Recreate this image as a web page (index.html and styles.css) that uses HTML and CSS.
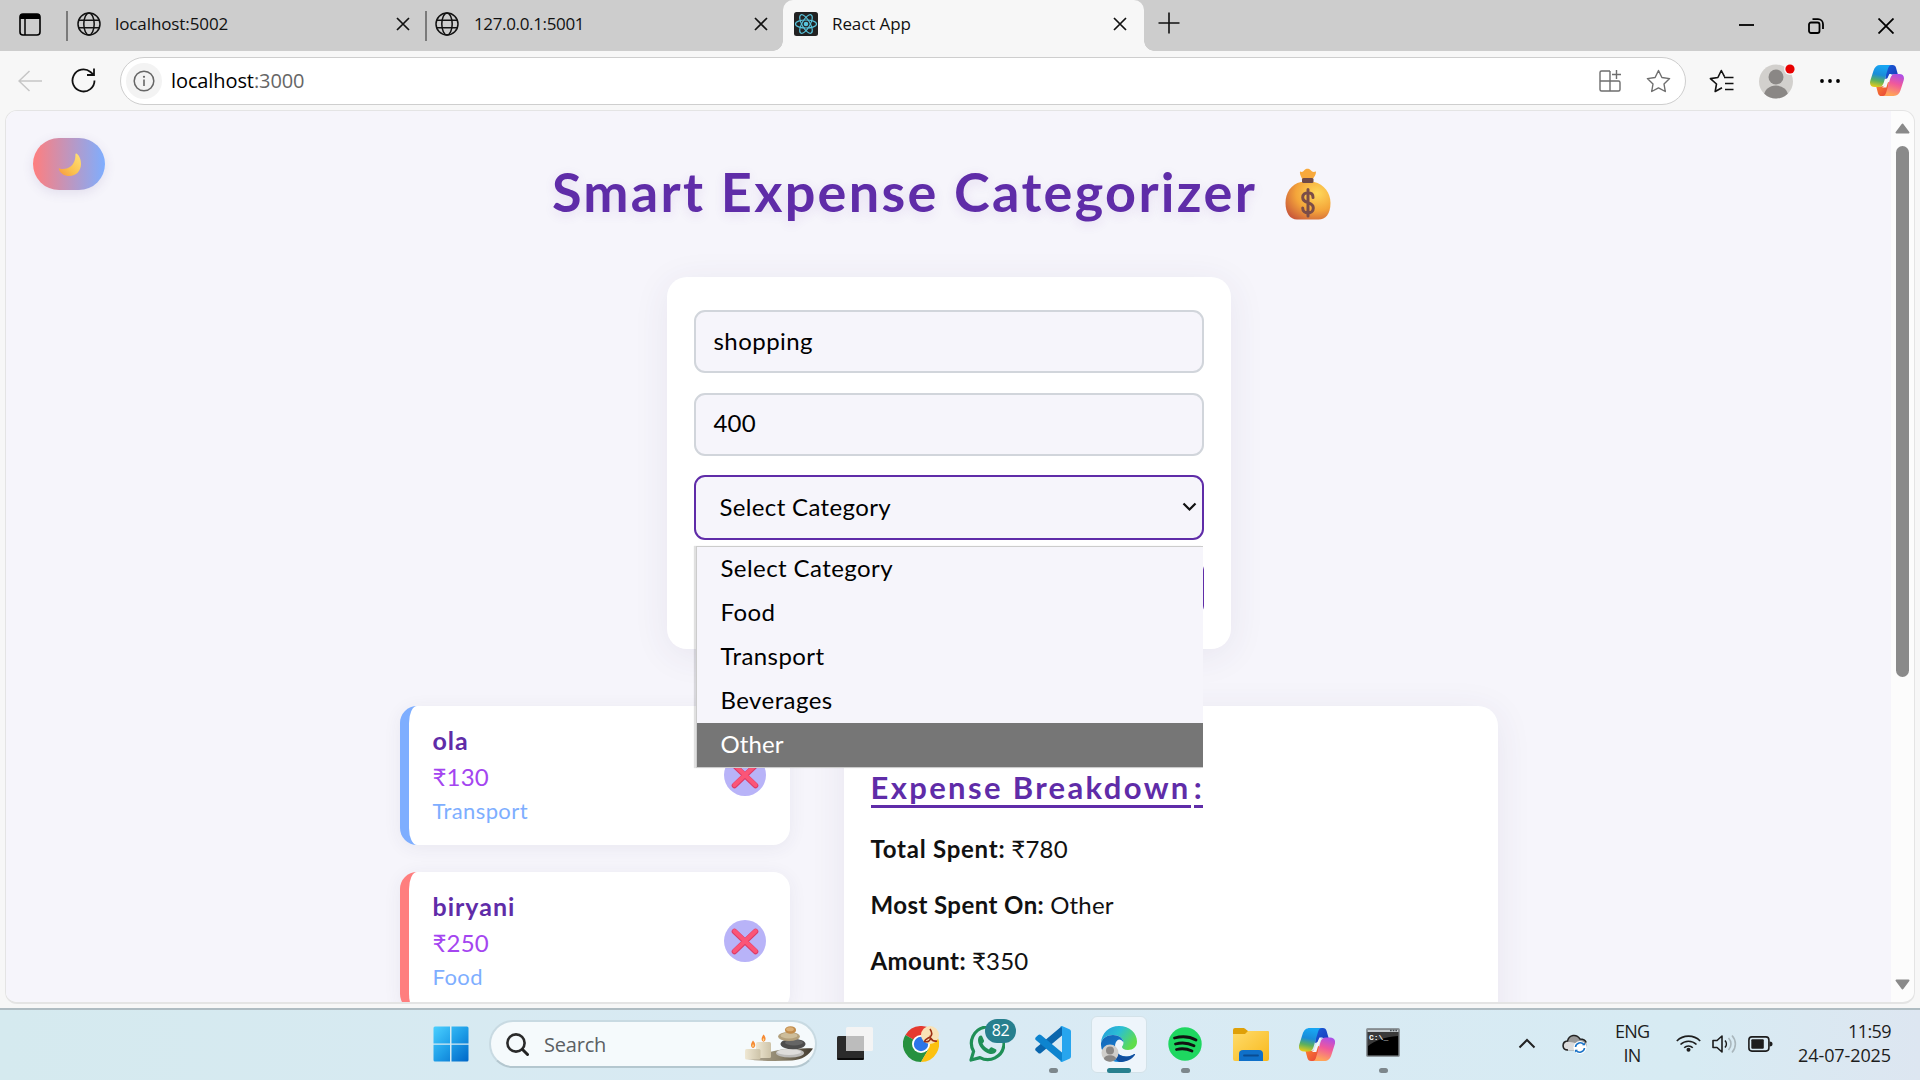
FILE: index.html
```html
<!DOCTYPE html>
<html lang="en">
<head>
<meta charset="utf-8">
<title>React App</title>
<link rel="stylesheet" href="styles.css">
</head>
<body>
<svg class="defs" width="0" height="0" aria-hidden="true">
  <defs>
    <linearGradient id="cpBlue" x1="0.3" y1="0" x2="0.1" y2="1"><stop offset="0" stop-color="#18a5f2"/><stop offset=".4" stop-color="#1a8cd8"/><stop offset=".68" stop-color="#5cb05e"/><stop offset="1" stop-color="#f8cf10"/></linearGradient>
    <linearGradient id="cpDark" x1="0" y1="0" x2="1" y2="1"><stop offset="0" stop-color="#1b5fd9"/><stop offset="1" stop-color="#1636b8"/></linearGradient>
    <linearGradient id="cpPink" x1="0.9" y1="0" x2="0.6" y2="1"><stop offset="0" stop-color="#a54df0"/><stop offset=".5" stop-color="#f0589c"/><stop offset="1" stop-color="#ffa35a"/></linearGradient>
    <linearGradient id="cpRed" x1="0" y1="0" x2="1" y2="1"><stop offset="0" stop-color="#fb8a2c"/><stop offset="1" stop-color="#e8403c"/></linearGradient>
    <linearGradient id="winTop" x1="0" y1="0" x2="1" y2="1"><stop offset="0" stop-color="#4bd0ff"/><stop offset=".5" stop-color="#1f9fe8"/><stop offset="1" stop-color="#0067c8"/></linearGradient>
    <radialGradient id="bag" cx=".7" cy=".3" r=".85"><stop offset="0" stop-color="#ffd95a"/><stop offset=".55" stop-color="#f4a53a"/><stop offset="1" stop-color="#c9583a"/></radialGradient>
    <linearGradient id="moon" x1="1" y1="0" x2="0" y2="1"><stop offset="0" stop-color="#ffe27a"/><stop offset=".6" stop-color="#fbc04e"/><stop offset="1" stop-color="#f79540"/></linearGradient>
    <linearGradient id="edgeA" x1="0" y1="0" x2="1" y2=".5"><stop offset="0" stop-color="#2498dc"/><stop offset=".5" stop-color="#2bbfd4"/><stop offset="1" stop-color="#5fdd4c"/></linearGradient>
    <linearGradient id="edgeB" x1="0" y1="0" x2=".6" y2="1"><stop offset="0" stop-color="#1565b5"/><stop offset="1" stop-color="#1487dc"/></linearGradient>
    <linearGradient id="folder" x1="0" y1="0" x2="1" y2="1"><stop offset="0" stop-color="#ffdc6b"/><stop offset="1" stop-color="#f8b81c"/></linearGradient>
    <linearGradient id="candle" x1="0" y1="0" x2="1" y2="0"><stop offset="0" stop-color="#efe8d4"/><stop offset="1" stop-color="#cdc3a8"/></linearGradient>
    <linearGradient id="tray" x1="0" y1="0" x2="1" y2="0"><stop offset="0" stop-color="#b5ac98"/><stop offset=".5" stop-color="#8f866f"/><stop offset="1" stop-color="#3f382d"/></linearGradient>
    <symbol id="globe" viewBox="0 0 24 24"><g fill="none" stroke="#111" stroke-width="1.5"><circle cx="12" cy="12" r="11"/><ellipse cx="12" cy="12" rx="5.2" ry="11"/><path d="M2 8.2h20M2 15.8h20"/></g></symbol>
    <symbol id="cross" viewBox="0 0 14 14"><path d="M1 1l12 12M13 1L1 13" fill="none" stroke="#111" stroke-width="1.7"/></symbol>
    <symbol id="copilot" viewBox="0 0 36 33">
      <path d="M17 0h7c2 0 3 1 3.600 3l2 7h-5c-3 0-4.500 1-5.500 4l-3 1z" fill="url(#cpDark)"/>
      <path d="M19 33h-7c-2 0-3-1-3.600-3l-1.900-7h5c3 0 4.500-1 5.500-4l3-1z" fill="url(#cpRed)"/>
      <path d="M11 0h12c-2 0-3.200 1.500-4 4l-4.500 15c-1 3-2.500 4.500-5.500 4.500H5c-4 0-6-2.500-4.700-7L3.600 6C5 2 7 0 11 0z" fill="url(#cpBlue)"/>
      <path d="M25 33H13.500c2 0 3-1.500 3.700-4L21.500 14c1-3 2.500-4.500 5.500-4.500h4c4 0 6 2.500 4.700 7L32.400 27C31 31 29 33 25 33z" fill="url(#cpPink)"/>
      <path d="M20.500 9.500h3.500c-2 .7-3 2-3.700 4.500l-3 10h-4.500c1.500-.8 2.400-2 3-4z" fill="#f4f6fa"/>
    </symbol>
    <symbol id="redx" viewBox="0 0 28 27"><path d="M3.500 3.500l21 20M24.500 3.500l-21 20" fill="none" stroke="#dd3c68" stroke-width="5.600" stroke-linecap="round"/><path d="M3.500 3l21 20M24.500 3l-21 20" fill="none" stroke="#fb5577" stroke-width="4" stroke-linecap="round"/></symbol>
  </defs>
</svg>

<div class="desktop">
  <header class="tabstrip">
    <svg class="tab-actions" width="22" height="23" viewBox="0 0 22 23"><rect x="1" y="1" width="20" height="21" rx="3" fill="none" stroke="#000" stroke-width="1.600"/><path d="M1 6V4a3 3 0 0 1 3-3h14a3 3 0 0 1 3 3v2z" fill="#000"/><path d="M6 6v16" stroke="#000" stroke-width="1.500"/></svg>
    <div class="tab tab-first"><svg width="24" height="24"><use href="#globe"/></svg><span class="tab-title">localhost:5002</span><svg width="14" height="14"><use href="#cross"/></svg></div>
    <div class="tab tab-second"><svg width="24" height="24"><use href="#globe"/></svg><span class="tab-title">127.0.0.1:5001</span><svg width="14" height="14"><use href="#cross"/></svg></div>
    <div class="tab tab-active">
      <svg width="24" height="24" viewBox="0 0 24 24"><rect width="24" height="24" rx="2.500" fill="#222"/><g fill="none" stroke="#58c4dc" stroke-width="1.200"><ellipse cx="12" cy="12" rx="10.500" ry="4"/><ellipse cx="12" cy="12" rx="10.500" ry="4" transform="rotate(60 12 12)"/><ellipse cx="12" cy="12" rx="10.500" ry="4" transform="rotate(120 12 12)"/></g><circle cx="12" cy="12" r="2.300" fill="#58c4dc"/></svg>
      <span class="tab-title">React App</span><svg width="14" height="14"><use href="#cross"/></svg>
    </div>
    <svg class="new-tab" width="22" height="22" viewBox="0 0 22 22"><path d="M11 0.500v21M0.500 11h21" stroke="#111" stroke-width="1.600"/></svg>
    <div class="window-controls">
      <svg width="15" height="15" viewBox="0 0 15 15"><path d="M0 7h15" stroke="#000" stroke-width="1.800"/></svg>
      <svg width="16" height="16" viewBox="0 0 16 16"><g fill="none" stroke="#000" stroke-width="1.800"><rect x="1" y="4.500" width="10.500" height="10.500" rx="2"/><path d="M4.500 1.200H10a5 5 0 0 1 5 5V11"/></g></svg>
      <svg width="16" height="16" viewBox="0 0 16 16"><path d="M.5.5l15 15M15.500.5l-15 15" stroke="#000" stroke-width="1.800"/></svg>
    </div>
  </header>

  <div class="toolbar">
    <svg class="back" width="24" height="22" viewBox="0 0 24 22"><path d="M24 11H1M11.500 1L1 11l10.500 10" fill="none" stroke="#c6c6c6" stroke-width="1.500"/></svg>
    <svg class="reload" width="25" height="25" viewBox="0 0 25 25"><path d="M23.500 12.500A11 11 0 1 1 19.500 4l3 2.600M23 .5v6.500h-7" fill="none" stroke="#111" stroke-width="1.800"/></svg>
    <div class="address">
      <span class="site-info"><svg width="22" height="22" viewBox="0 0 22 22"><circle cx="11" cy="11" r="9.800" fill="none" stroke="#666" stroke-width="1.500"/><path d="M11 9.500V16" stroke="#666" stroke-width="1.600"/><circle cx="11" cy="6.800" r="1.100" fill="#666"/></svg></span>
      <span class="url">localhost<i>:3000</i></span>
      <svg class="apps" width="22" height="22" viewBox="0 0 22 22"><g fill="none" stroke="#6e6e6e" stroke-width="1.400"><path d="M11 1H2.500A1.500 1.500 0 0 0 1 2.500v17A1.500 1.500 0 0 0 2.500 21h17a1.500 1.500 0 0 0 1.500-1.500V12.500A1.500 1.500 0 0 0 19.500 11H1M11 1v20"/><path d="M17.500 0v9M13 4.500h9"/></g></svg>
      <svg width="25" height="24" viewBox="0 0 25 24"><path d="M12.500 1.500l3.400 7 7.700 1.100-5.600 5.400 1.300 7.500-6.800-3.600-6.800 3.600L7 15 1.400 9.600l7.700-1.100z" fill="none" stroke="#6e6e6e" stroke-width="1.400" stroke-linejoin="round"/></svg>
    </div>
    <svg class="favs" width="25" height="24" viewBox="0 0 25 24"><path d="M13 18.800l-6.800 3.700L7.500 15 1.400 9.600l7.500-1.100 3.400-7 3.200 6.200M15 8.500h9.500M16 14.500h8.500M16 20.500h8.500" fill="none" stroke="#111" stroke-width="1.600" stroke-linejoin="round"/></svg>
    <svg class="avatar" width="37" height="36" viewBox="0 0 37 36"><clipPath id="avc"><circle cx="17" cy="18.500" r="17"/></clipPath><g clip-path="url(#avc)"><rect width="36" height="36" fill="#d2d0cd"/><circle cx="17" cy="14" r="7.500" fill="#8a8785"/><ellipse cx="17" cy="33" rx="12" ry="10.500" fill="#8a8785"/></g><circle cx="31" cy="6" r="6" fill="#f7f7f7"/><circle cx="31" cy="6" r="4.600" fill="#e80000"/></svg>
    <svg class="dots" width="22" height="6" viewBox="0 0 22 6"><circle cx="3" cy="3" r="1.900"/><circle cx="11" cy="3" r="1.900"/><circle cx="19" cy="3" r="1.900"/></svg>
    <svg class="copilot" width="34" height="31"><use href="#copilot"/></svg>
  </div>

  <div class="viewport">
    <main class="page">
      <div class="page-head">
        <button class="theme"><svg width="24" height="24" viewBox="0 0 24 24"><path d="M18.500 0.500C21 2 23 6 23 11c0 7-5 12-11.500 12C6 23 2 20 .800 16.200c-.3-.9.2-1.100.9-.8 3 1 7 .8 10.500-1.600C16 11 17.500 6.500 17.400 1.400c0-.9.500-1.200 1.100-.9z" fill="url(#moon)"/></svg></button>
        <h1>Smart Expense Categorizer
          <svg width="46" height="52" viewBox="0 0 46 52"><path d="M15 3.500c2 1 3 .5 4.500-1.500C21 .2 24 .2 25.500 2c1.500 2 3 2.500 5.500 1.500 0 4-2 5-3.500 8.500h-10C16.500 8.500 14.500 7 15 3.500z" fill="#f8a93c"/><path d="M16 14h13c10 2 16.500 11 16.500 21 0 11-5 16.500-12 16.500H12C5 51.500.5 45 .5 35 .5 25 6 16 16 14z" fill="url(#bag)"/><rect x="17" y="10" width="11.500" height="5" rx="1.500" fill="#704a48"/><path d="M28 29.500c0-3-2-4.800-5-4.800s-5.300 1.800-5.300 4.800c0 3.300 2.300 4.200 5.300 5.200s5.300 2 5.300 5.200-2.300 5-5.300 5-5.300-1.900-5.300-5M23 21.500v26.500" fill="none" stroke="#7b4d48" stroke-width="3" stroke-linecap="round"/></svg>
        </h1>
      </div>

      <form class="expense-form">
        <div class="field">shopping</div>
        <div class="field field-amount">400</div>
        <div class="select">
          <span>Select Category</span>
          <svg width="15" height="10" viewBox="0 0 15 10"><path d="M1.500 1.500l6 6 6-6" fill="none" stroke="#111" stroke-width="2.200"/></svg>
          <ul class="options">
            <li>Select Category</li><li>Food</li><li>Transport</li><li>Beverages</li><li class="hover">Other</li>
          </ul>
        </div>
        <div class="submit"></div>
      </form>

      <div class="columns">
        <div class="list">
          <article class="expense expense-blue"><div><h3>ola</h3><p class="amount">₹130</p><p class="category">Transport</p></div><span class="delete"><svg width="28" height="27"><use href="#redx"/></svg></span></article>
          <article class="expense expense-red"><div><h3>biryani</h3><p class="amount">₹250</p><p class="category">Food</p></div><span class="delete"><svg width="28" height="27"><use href="#redx"/></svg></span></article>
        </div>
        <section class="breakdown">
          <h2><span>Expense Breakdown</span><span>:</span></h2>
          <p><b class="total">Total Spent:</b><span>₹780</span></p>
          <p><b>Most Spent On:</b><span>Other</span></p>
          <p><b>Amount:</b><span>₹350</span></p>
        </section>
      </div>
    </main>
    <div class="scrollbar">
      <svg width="15" height="11" viewBox="0 0 15 11"><path d="M7.500 1.500L13.500 9.500H1.500z" fill="#8a8a8a" stroke="#8a8a8a" stroke-width="2" stroke-linejoin="round"/></svg>
      <div class="thumb"></div>
      <svg class="down" width="15" height="11" viewBox="0 0 15 11"><path d="M7.500 9.500L1.500 1.500h12z" fill="#8a8a8a" stroke="#8a8a8a" stroke-width="2" stroke-linejoin="round"/></svg>
    </div>
  </div>

  <footer class="taskbar">
    <div class="cell start"><svg width="36" height="36" viewBox="0 0 36 36"><path d="M2 .5h15v17H.5V2A1.500 1.500 0 0 1 2 .5zM18.500.5H34A1.500 1.500 0 0 1 35.500 2v15.500h-17zM.5 18.800H17v16.700H2A1.500 1.500 0 0 1 .5 34zM18.500 18.800h17V34a1.500 1.500 0 0 1-1.500 1.500H18.500z" fill="url(#winTop)"/></svg></div>
    <div class="search">
      <svg width="23" height="23" viewBox="0 0 23 23"><circle cx="10" cy="10" r="8.600" fill="none" stroke="#2a2a2a" stroke-width="2.600"/><path d="M16.500 16.500l5 5" stroke="#222" stroke-width="3" stroke-linecap="round"/></svg>
      <span>Search</span>
      <svg width="70" height="37" viewBox="0 0 70 37"><path d="M1 31c10-1 18-4 34-7 12-1 24-2 34-1.500C65 29 58 34 48 34.500 30 35.500 12 35 3 33z" fill="url(#tray)"/><rect x="12" y="16" width="15" height="16" rx="1.500" fill="url(#candle)"/><rect x="1" y="23" width="15.500" height="10.500" rx="1.500" fill="url(#candle)"/><path d="M19.500 8.500c3 3 2.500 6.500 0 7.300-2.500-.8-2.500-4 0-7.300zM9 14.500c3 3 2.800 6.500.3 7.500-3-.8-3-4-.3-7.500z" fill="#f58a35"/><path d="M19.500 12c1.200 1.500 1 2.500 0 3-1-.5-1-1.500 0-3zM9 18c1.200 1.500 1 2.500 0 3-1-.5-1-1.500 0-3z" fill="#ffd98a"/><ellipse cx="46" cy="27" rx="14" ry="4.500" fill="#bdbcba"/><ellipse cx="45" cy="26" rx="12" ry="3" fill="#dedddb"/><ellipse cx="49" cy="18" rx="12.500" ry="5.300" fill="#4c4c4c"/><ellipse cx="50" cy="16.500" rx="9" ry="3" fill="#656565"/><ellipse cx="45" cy="10.500" rx="11" ry="4.500" fill="#b3a07c"/><ellipse cx="45" cy="9.500" rx="8.500" ry="3" fill="#cdbd9a"/><ellipse cx="46.500" cy="4" rx="5.600" ry="3.800" fill="#c18c4c"/><ellipse cx="46" cy="3.200" rx="3.800" ry="2" fill="#dcb076"/></svg>
    </div>
    <div class="cell"><svg width="36" height="36" viewBox="0 0 36 36"><rect x="0" y="10" width="27" height="24" rx="1.500" fill="#2b2b2b"/><path d="M.5 33h26" stroke="#000" stroke-width="1.500"/><rect x="9" y="1" width="27" height="24" rx="1.500" fill="#f4f4f4"/><path d="M9 10h18v15H9z" fill="#bcbcbc"/></svg></div>
    <div class="cell"><svg width="36" height="36" viewBox="0 0 36 36"><path d="M18 18L2.400 9A18 18 0 0 1 33.600 9z" fill="#e53a30"/><path d="M18 18L2.400 9A18 18 0 0 0 18 36l8-13.500z" fill="#26913f"/><path d="M18 18l15.600-9A18 18 0 0 1 18 36l7-12z" fill="#fcc111"/><path d="M18 9.800h15.600L30 18z" fill="#fcc111"/><circle cx="18" cy="18" r="9" fill="#fff"/><circle cx="18" cy="18" r="7.200" fill="#2c75e8"/><circle cx="27" cy="9" r="9" fill="#f9e2b6"/><path d="M27 3c2 3 2.500 6 0 8-2.500 1.500-5 2-5.500 4.500 3 .8 6-.5 6-3.500 1.500 2.500 4 3.500 6.500 3" fill="none" stroke="#9c2f14" stroke-width="1.600"/></svg></div>
    <div class="cell"><svg width="36" height="36" viewBox="0 0 36 36"><path d="M2 34l2.600-8.600A16.300 16.300 0 1 1 11 31.600z" fill="none" stroke="#1f8f56" stroke-width="3.200" stroke-linejoin="round"/><path d="M9.500 11.500c1-2.200 3-2.800 4-.5l1.500 3.500c.3 1-.5 2-1.500 3 1.500 3 3.500 4.500 6.500 6 1-1.500 2-2.500 3.200-2l3.500 1.700c1.500.8.500 3-1.200 4-7 4-19-8-16-15.700z" fill="#1f8f56"/></svg><span class="badge">82</span></div>
    <div class="cell"><svg width="36" height="36" viewBox="0 0 36 36"><path d="M27 0v9.500L6 27c-.8.700-2 .7-2.700 0L.8 24.700c-.8-.8-.8-2 0-2.800z" fill="#0a66ad"/><path d="M27 36v-9.500L6 9c-.8-.7-2-.7-2.700 0L.8 11.300c-.8.800-.8 2 0 2.800z" fill="#0d84cf"/><path d="M27 0l7.500 3.300c1 .5 1.500 1.300 1.500 2.400v24.600c0 1.100-.5 1.900-1.500 2.400L27 36c-1 0-1.500-.3-2-1 1 .5 2 0 2-1.500V2.500C27 1 26 .5 25 1c.5-.7 1-1 2-1z" fill="#27a5ee"/></svg><span class="dot"></span></div>
    <div class="cell"><div class="tile"><svg width="36" height="36" viewBox="0 0 36 36"><path d="M0 17C.5 7 8 0 18 0c11 0 18 7.500 18 15.500 0 5.500-4 8.500-9 8.500-4 0-6-1.500-6-3 0-1 1.500-1.500 1.500-4.500 0-4.500-5-7.500-10.500-7.500C6 9 1.500 12 0 17z" fill="url(#edgeA)"/><path d="M0 17c1.500-5 6-8 12-8 5.500 0 10.500 3 10.500 7.500-1-2-3-3-4.500-3-3 1-4 4-4 7 0 6 5 10 11 10 3 0 5-.5 7.500-2-3 5-8.500 7.500-14 7.500C7 36-.5 27 0 17z" fill="url(#edgeB)"/><path d="M14 20c0 7 6 11 12 10.500 3-.2 5-1 7-2.400.800-.5 1.300.1.900.9C31 33.500 25 36 18.500 36 13 34 11 25 14 20z" fill="#104f9e"/><circle cx="9" cy="27" r="8.500" fill="#d0cecb"/><circle cx="9" cy="24.500" r="4" fill="#8a8785"/><path d="M3 33c0-5 12-5 12 0-3 3.500-9 3.500-12 0z" fill="#8a8785"/></svg></div><span class="dot dot-active"></span></div>
    <div class="cell"><svg width="34" height="34" viewBox="0 0 34 34"><circle cx="17" cy="17" r="16.700" fill="#1ed760"/><path d="M6.500 11c7.500-2 15.500-1.300 21.500 2M7.500 17c6.500-1.800 13-1 18.500 1.800M8.500 22.500c5.500-1.400 10.500-.8 15.500 1.500" fill="none" stroke="#111" stroke-width="2.800" stroke-linecap="round"/></svg><span class="dot"></span></div>
    <div class="cell"><svg width="36" height="33" viewBox="0 0 36 33"><path d="M0 2a2 2 0 0 1 2-2h8c1.500 0 2 .5 3 1.500L15 3h19a2 2 0 0 1 2 2v5H0z" fill="#dfa008"/><path d="M0 6h12l3-3h19.500A1.500 1.500 0 0 1 36 4.500V31a2 2 0 0 1-2 2H2a2 2 0 0 1-2-2z" fill="url(#folder)"/><path d="M6 33v-7a4 4 0 0 1 4-4h16a4 4 0 0 1 4 4v7z" fill="#0f70c9"/><path d="M11 27.500h14" stroke="#0a4c92" stroke-width="1.800" stroke-linecap="round"/></svg></div>
    <div class="cell"><svg width="36" height="33"><use href="#copilot"/></svg></div>
    <div class="cell"><svg class="cmd" width="34" height="29" viewBox="0 0 34 29"><rect x=".8" y=".8" width="32.400" height="27.400" rx="1" fill="#000" stroke="#8f979c" stroke-width="1.600"/><path d="M1.500 1.500h31V4h-31z" fill="#c3cace"/><path d="M24 2.500h7" stroke="#4b5258" stroke-width="1.400" stroke-dasharray="1.700 1"/><path d="M2 4h30v4C18 9 8 13 2 18z" fill="#3a3a3a"/><text x="3" y="11.500" class="prompt">C:\_</text></svg><span class="dot"></span></div>
    <div class="tray">
      <svg width="18" height="11" viewBox="0 0 18 11"><path d="M1.500 9.500L9 2l7.500 7.500" fill="none" stroke="#222" stroke-width="2"/></svg>
      <svg class="cloud" width="26" height="21" viewBox="0 0 26 21"><path d="M6 17.500c-7 0-7-9-.5-9.500C7 2 14.500 0 18 6c4 0 6.500 2.500 6.500 6s-2.500 5.500-5.500 5.500z" fill="#999"/><path d="M6 17c-5 0-5.500-6-1.500-8 4 0 9 .500 14 3v5z" fill="#dcdcdc"/><path d="M6 17c-6.500 0-6.500-8.500-.5-9C7 1.500 14.500.500 18 6c3 0 5.500 1.500 6.200 3.500" fill="none" stroke="#222" stroke-width="1.500"/><circle cx="18" cy="14.500" r="6.500" fill="#fff"/><path d="M13.500 14a4.700 4.700 0 0 1 8.500-2.200M22.500 15a4.700 4.700 0 0 1-8.500 2.200" fill="none" stroke="#1a73c7" stroke-width="1.600"/><path d="M20.200 12.200h2.800V9.400zM15.800 16.800H13v2.800z" fill="#1a73c7"/></svg>
      <div class="lang"><span>ENG</span><span>IN</span></div>
      <svg class="wifi" width="25" height="18" viewBox="0 0 25 18"><g fill="none" stroke="#1d1d1d" stroke-width="1.600"><path d="M.8 7a16.500 16.500 0 0 1 23.400 0M4.500 10.500a11.300 11.300 0 0 1 16 0M8.200 13.800a6 6 0 0 1 8.600 0"/></g><circle cx="12.500" cy="15.800" r="2" fill="#1d1d1d"/></svg>
      <svg class="volume" width="25" height="20" viewBox="0 0 25 20"><g fill="none" stroke="#1d1d1d" stroke-width="1.600"><path d="M1 6.500h4L10 2v16l-5-4.500H1z" stroke-linejoin="round"/><path d="M13 6.500c1.800 2 1.800 5 0 7"/><path d="M16.500 4c3.300 3.500 3.300 8.500 0 12M20 1.500c4.500 5 4.500 12 0 17" stroke="#a9b6bc"/></g></svg>
      <svg class="battery" width="25" height="16" viewBox="0 0 25 16"><rect x=".9" y=".9" width="20" height="14.200" rx="3" fill="none" stroke="#1d1d1d" stroke-width="1.600"/><rect x="3.300" y="3.300" width="12.500" height="9.400" rx="1" fill="#1d1d1d"/><path d="M21.500 5.500c2.500 0 3 1 3 2.500s-.5 2.500-3 2.500z" fill="#1d1d1d"/></svg>
      <div class="clock"><span class="time">11:59</span><span>24-07-2025</span></div>
    </div>
  </footer>
</div>
</body>
</html>
```
FILE: styles.css
```css
* { box-sizing: border-box; }
html, body { margin: 0; height: 100%; overflow: hidden; }
body { font-family: "Open Sans", "Noto Sans", sans-serif; color: #111; background: #f7f7f7; }
h1, h2, h3, p, ul { margin: 0; padding: 0; }
svg { display: block; flex: none; }
.defs { position: absolute; }
.desktop { width: 1920px; height: 1080px; display: flex; flex-direction: column; overflow: hidden; }

/* Tab strip */
.tabstrip { height: 51px; flex: none; background: #cdcdcd; display: flex; padding-left: 19px; }
.tab-actions { margin-top: 13px; margin-right: 25px; }
.tab { display: flex; align-items: center; height: 51px; padding-bottom: 3px; font-size: 17px; }
.tab-title { flex: 1; padding-bottom: 2px; letter-spacing: -0.1px; white-space: nowrap; }
.tab-first { width: 359px; padding-left: 11px; padding-right: 15px; gap: 14px; background: linear-gradient(#7a7a7a, #7a7a7a) 0 11px / 2px 30px no-repeat; }
.tab-second { width: 358px; padding-left: 10px; padding-right: 15px; gap: 15px; background: linear-gradient(#7a7a7a, #7a7a7a) 0 11px / 2px 30px no-repeat; }
.tab-second .tab-title { letter-spacing: -0.35px; }
.tab-active { position: relative; width: 361px; padding: 0 17px 3px 11px; gap: 14px; border-radius: 10px 10px 0 0; background: #f7f7f7; }
.tab-active::before, .tab-active::after { content: ""; position: absolute; bottom: 0; width: 10px; height: 10px; }
.tab-active::before { left: -10px; background: radial-gradient(circle at 0 0, transparent 9.5px, #f7f7f7 10px); }
.tab-active::after { right: -10px; background: radial-gradient(circle at 100% 0, transparent 9.5px, #f7f7f7 10px); }
.new-tab { margin: 12px 0 0 14px; }
.window-controls { margin-left: auto; display: flex; align-items: center; gap: 54px; padding-right: 26px; }

/* Toolbar */
.toolbar { height: 59px; flex: none; display: flex; align-items: center; padding-left: 18px; background: #f7f7f7; }
.reload { margin: 0 24px 0 29px; }
.address { width: 1566px; height: 48px; border: 1.5px solid #cecece; border-radius: 24px; background: #fff; display: flex; align-items: center; padding: 0 14px 0 5px; }
.site-info { width: 36px; height: 36px; border-radius: 50%; background: #f3f3f3; display: grid; place-items: center; }
.url { flex: 1; margin-left: 9px; font-size: 20px; letter-spacing: -0.1px; color: #000; }
.url i { font-style: normal; color: #666; }
.apps { margin-right: 25px; }
.favs { margin-left: 23px; }
.avatar { margin-left: 25px; margin-right: 23px; }
.copilot { margin-left: 29px; }

/* Browser viewport */
.viewport { flex: none; height: 894px; margin: 0 5px 0 5px; border: 1px solid #e4e4e4; border-bottom-width: 2px; border-radius: 12px; display: flex; overflow: hidden; background: #fcfcfc; }
.scrollbar { width: 23px; display: flex; flex-direction: column; align-items: center; padding: 12px 0; margin-left: auto; }
.thumb { width: 13px; height: 531px; margin-top: 12px; border-radius: 7px; background: #8a8a8a; }
.down { margin-top: auto; }

/* Expense page */
.page { width: 1885px; padding-top: 1px; background: #f6f5fb; font-family: "Lato", "Open Sans", sans-serif; }
.page-head { display: grid; grid-template-columns: 1fr auto 1fr; align-items: start; padding-right: 14px; }
.theme { width: 72px; height: 52px; margin: 26px 0 0 27px; padding: 1px 0 0 2px; border: 0; border-radius: 26px; background: linear-gradient(90deg, #ff7e7e, #7eaeff); box-shadow: 0 3px 12px rgba(80, 60, 130, .12); display: grid; place-items: center; }
h1 { display: flex; align-items: center; gap: 28px; height: 64px; margin-top: 48px; font-size: 54px; line-height: 64px; font-weight: 700; letter-spacing: 2.3px; color: #5f2ca8; text-shadow: 0 3px 12px rgba(95, 44, 168, .12); white-space: nowrap; }
h1 svg { position: relative; top: 2px; }
.expense-form { width: 564px; height: 372px; margin: 53px auto 0; padding: 33px 27px; display: flex; flex-direction: column; gap: 19.5px; border-radius: 20px; background: #fff; box-shadow: 0 6px 36px rgba(60, 50, 100, .08); }
.field, .select { height: 63px; flex: none; border: 2px solid #d1d5db; border-radius: 11px; background: #f6f5fb; padding: 0 18px 2px; display: flex; align-items: center; font-size: 24px; letter-spacing: .45px; color: #000; }
.field-amount { padding-bottom: 3px; letter-spacing: .2px; }
.select { position: relative; height: 65px; border-color: #5f2ca8; padding: 0 5px 3px 24px; justify-content: space-between; letter-spacing: .35px; }
.select svg { position: relative; top: 1px; }
.submit { height: 56px; flex: none; margin-left: 2px; border-radius: 11px; background: #5f2ca8; }
.options { position: absolute; z-index: 2; top: 69px; left: 0; width: 507px; list-style: none; background: #f6f5fb; border: solid #ccc; border-width: 1px 0 1px 1px; box-shadow: -2px 0 1px rgba(0, 0, 0, .12); }
.options li { height: 44px; line-height: 42px; padding-left: 24px; letter-spacing: .42px; }
.options .hover { background: #767676; color: #fff; letter-spacing: .1px; }
.columns { display: flex; gap: 54px; width: 1098px; margin: 57px auto 0; }
.list { width: 390px; display: flex; flex-direction: column; gap: 27px; }
.expense { height: 139px; border-left: 9px solid; border-radius: 17px; background: #fff; padding: 16px 24px 0; display: flex; justify-content: space-between; box-shadow: 0 3px 18px rgba(60, 50, 100, .07); }
.expense-blue { border-left-color: #7eaeff; }
.expense-red { border-left-color: #ff7e7e; }
h3 { font-size: 25px; line-height: 37px; font-weight: 700; letter-spacing: 1px; color: #5f2ca8; }
.amount { font-size: 24px; line-height: 36px; letter-spacing: .2px; color: #a445f0; }
.category { font-size: 22px; line-height: 31px; letter-spacing: .4px; color: #7eaeff; }
.delete { width: 42px; height: 42px; margin-top: 32px; border-radius: 50%; background: #b8b3f8; display: grid; place-items: center; }
.breakdown { width: 654px; height: 420px; padding: 62px 27px; border-radius: 20px; background: #fff; box-shadow: 0 6px 36px rgba(60, 50, 100, .08); }
h2 { display: flex; gap: 3px; margin-bottom: 13px; font-size: 31px; line-height: 37px; font-weight: 700; letter-spacing: 2.35px; color: #5f2ca8; }
h2 span { height: 40px; line-height: 39px; border-bottom: 3px solid #5f2ca8; }
h2 span + span { width: 9px; }
.breakdown p { display: flex; gap: 6px; font-size: 24px; line-height: 56px; letter-spacing: .2px; color: #111; }
.breakdown b { letter-spacing: .42px; }
.breakdown .total { letter-spacing: .75px; }

/* Taskbar */
.taskbar { margin-top: 4px; height: 72px; flex: none; border-top: 2px solid #afbcc2; background: linear-gradient(90deg, #d5eaef, #d9eaf4 50%, #d7ebf3 88%, #dde6f1); display: flex; align-items: center; padding-left: 418px; }
.cell { position: relative; width: 66px; height: 70px; flex: none; display: grid; place-items: center; padding-bottom: 2px; }
.search { width: 328px; height: 48px; flex: none; margin: 0 5px 2px 5px; border: 2px solid #c8dae2; border-bottom-color: #b4c7cf; border-radius: 24px; background: #f5fafc; display: flex; align-items: center; padding: 0 1px 0 15px; }
.search span { flex: 1; margin-left: 15px; font-size: 20px; letter-spacing: -.2px; color: #5b6063; }
.badge { position: absolute; left: 31px; top: 9px; width: 31px; height: 24px; border-radius: 12px; background: #277f8e; color: #fff; font-size: 16px; line-height: 23px; text-align: center; letter-spacing: -.3px; }
.tile { width: 56px; height: 57px; border-radius: 6px; background: #eef5fb; border: 1px solid #d3e2e9; display: grid; place-items: center; }
.dot { position: absolute; bottom: 7px; left: 29px; width: 9px; height: 5px; border-radius: 3px; background: #7d878c; }
.dot-active { left: 21px; width: 24px; background: #277f8e; }
.cmd { margin-bottom: 3px; }
.prompt { font: 700 8px "Liberation Mono", monospace; fill: #fff; }
.tray { margin-left: auto; padding: 0 29px 3px 0; display: flex; align-items: center; font-size: 18px; line-height: 23.5px; color: #1d1d1d; }
.cloud { margin-left: 26px; }
.lang { width: 36px; margin-left: 26px; display: flex; flex-direction: column; align-items: center; letter-spacing: -.8px; }
.wifi { margin: 0 11px 2px 26px; }
.battery { margin: 0 25px 0 11px; }
.clock { display: flex; flex-direction: column; align-items: flex-end; letter-spacing: -.1px; }
.time { letter-spacing: -.6px; }
```
